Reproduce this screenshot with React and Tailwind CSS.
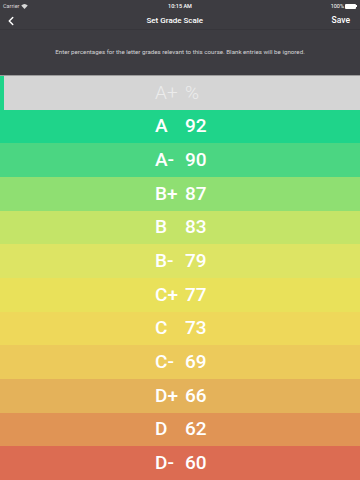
import { ChevronLeft } from "lucide-react";

const grades = [
    { letter: "A", pct: "92", color: "bg-[#1fd48a]" },
    { letter: "A-", pct: "90", color: "bg-[#4bd682]" },
    { letter: "B+", pct: "87", color: "bg-[#8fdf72]" },
    { letter: "B", pct: "83", color: "bg-[#c4e468]" },
    { letter: "B-", pct: "79", color: "bg-[#dde464]" },
    { letter: "C+", pct: "77", color: "bg-[#e9e15a]" },
    { letter: "C", pct: "73", color: "bg-[#eed85a]" },
    { letter: "C-", pct: "69", color: "bg-[#ecca5b]" },
    { letter: "D+", pct: "66", color: "bg-[#e4b25a]" },
    { letter: "D", pct: "62", color: "bg-[#e09455]" },
    { letter: "D-", pct: "60", color: "bg-[#dc6c52]" },
];

function StatusBar() {
    return (
        <div className="flex h-[12px] items-center justify-between px-[3px] text-[5.5px] text-white">
            <div className="flex w-[60px] items-center gap-[2px] text-[#d8d8d8]">
                <span>Carrier</span>
                <svg width="7" height="5" viewBox="0 0 14 10">
                    <path d="M7 10 L0.5 3.2 A9.5 9.5 0 0 1 13.5 3.2 Z" fill="#d8d8d8" />
                </svg>
            </div>
            <span className="font-medium">10:15 AM</span>
            <div className="flex w-[60px] items-center justify-end gap-[1px]">
                <span>100%</span>
                <div className="flex items-center">
                    <div className="h-[5px] w-[11px] rounded-[1px] bg-white" />
                    <div className="h-[2px] w-[1px] bg-white" />
                </div>
            </div>
        </div>
    );
}

export default function App() {
    return (
        <div
            className="flex h-[480px] w-[360px] flex-col overflow-hidden bg-[#3d3c41]"
            style={{ fontFamily: "Roboto, 'Liberation Sans', sans-serif" }}
        >
            <StatusBar />
            <div className="flex h-[18px] items-center justify-between border-b border-[#37363b] pr-[10px] pl-[4px] text-white">
                <ChevronLeft size={14} strokeWidth={2.5} />
                <span className="text-[8px] font-medium">Set Grade Scale</span>
                <span className="text-[8.5px] font-medium">Save</span>
            </div>
            <div className="flex h-[45px] items-center justify-center text-[6.2px] text-[#d4d4d6]">
                Enter percentages for the letter grades relevant to this course. Blank entries will be ignored.
            </div>
            <div className="flex flex-1 flex-col">
                <div className="flex flex-1 border-t border-[#9c9c9c] bg-[#d5d5d5]">
                    <div className="w-[4px] bg-[#1fd48a]" />
                    <div className="flex flex-1 items-center pl-[151px] text-[19px] font-light text-[#ececec]">
                        <span className="w-[30px]">A+</span>
                        <span>%</span>
                    </div>
                </div>
                {grades.map((g) => (
                    <div
                        key={g.letter}
                        className={`flex flex-1 items-center pl-[155px] text-[19px] font-medium text-white ${g.color}`}
                    >
                        <span className="w-[30px]">{g.letter}</span>
                        <span>{g.pct}</span>
                    </div>
                ))}
            </div>
        </div>
    );
}
